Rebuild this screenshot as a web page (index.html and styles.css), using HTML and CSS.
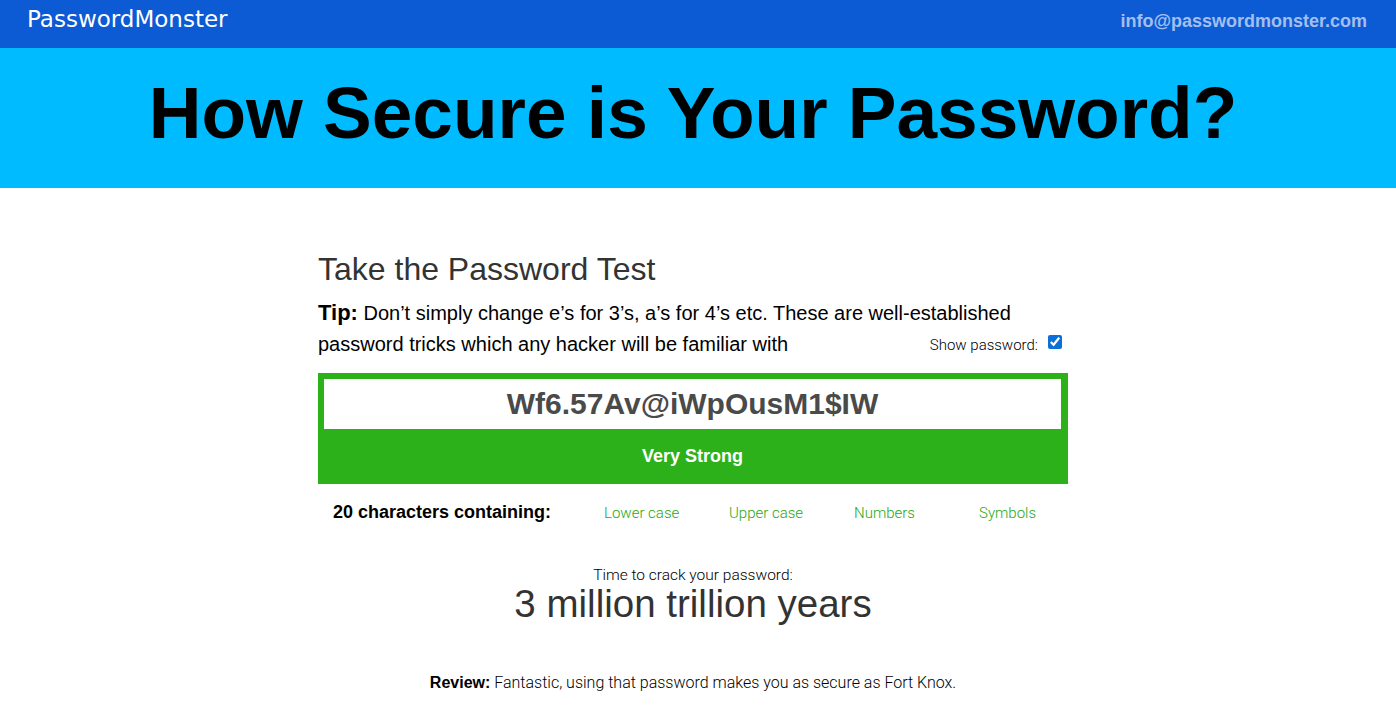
FILE: index.html
```html
<!DOCTYPE html>
<html lang="en">

<head>
  <meta charset="UTF-8">
  <meta name="viewport" content="width=device-width, initial-scale=1.0">
  <title>How Secure is Your Password? | PasswordMonster</title>
  <link rel="stylesheet" href="styles.css">
</head>

<body>
  <!-- Top bar -->
  <header class="pm-topbar">
    <a class="pm-logo" href="#">PasswordMonster</a>
    <a class="pm-email" href="#">info@passwordmonster.com</a>
  </header>

  <!-- Banner -->
  <div class="pm-banner">
    <h1 class="pm-banner-title">How Secure is Your Password?</h1>
  </div>

  <main class="pm-main">
    <div class="pm-tester">
      <h2 class="pm-heading">Take the Password Test</h2>

      <div class="pm-tip">
        <div class="pm-tip-line"><strong>Tip:</strong> Don’t simply change e’s for 3’s, a’s for 4’s etc. These are well-established</div>
        <div class="pm-tip-line pm-tip-last">
          <span>password tricks which any hacker will be familiar with</span>
          <label class="pm-show" for="pmShow">Show password: <input id="pmShow" type="checkbox" checked></label>
        </div>
      </div>

      <div class="pm-meter">
        <input class="pm-input" type="text" value="Wf6.57Av@iWpOusM1$IW" spellcheck="false">
        <div class="pm-strength">Very Strong</div>
      </div>

      <div class="pm-contains">
        <span class="pm-count">20 characters containing:</span>
        <span class="pm-type">Lower case</span>
        <span class="pm-type">Upper case</span>
        <span class="pm-type">Numbers</span>
        <span class="pm-type">Symbols</span>
      </div>

      <div class="pm-crack">
        <div class="pm-crack-label">Time to crack your password:</div>
        <div class="pm-crack-time">3 million trillion years</div>
      </div>

      <p class="pm-review"><strong>Review:</strong> Fantastic, using that password makes you as secure as Fort Knox.</p>
    </div>
  </main>
</body>

</html>
```

FILE: styles.css
```css
body {
  margin: 0;
  padding: 0;
  font-family: 'Liberation Sans', Arial, sans-serif;
  color: #000;
  background: #fff;
}

/* Topbar */
.pm-topbar {
  height: 48px;
  background-color: #0c5ad4;
  display: flex;
  align-items: center;
  justify-content: space-between;
  padding: 0 29px 0 27px;
}

.pm-logo {
  color: #fff;
  font-family: 'DejaVu Sans', sans-serif;
  font-size: 23px;
  text-decoration: none;
  margin-top: -10px;
}

.pm-email {
  color: #a3bfee;
  font-weight: 700;
  font-size: 18px;
  text-decoration: none;
  margin-top: -6px;
}

/* Banner */
.pm-banner {
  background-color: #00bbff;
  height: 140px;
  display: flex;
  align-items: center;
  justify-content: center;
  padding-right: 10px;
}

.pm-banner-title {
  margin: -11px 0 0;
  font-size: 73px;
  font-weight: 700;
  color: #000;
}

/* Main area */
.pm-main {
  padding: 63px 10px 0 0;
}

.pm-tester {
  width: 750px;
  margin: 0 auto;
}

.pm-heading {
  margin: 0;
  font-size: 32px;
  font-weight: 400;
  color: #333;
  line-height: 36px;
}

.pm-tip {
  margin-top: 10px;
  font-size: 20px;
  line-height: 31px;
}

.pm-tip strong {
  font-size: 22px;
}

.pm-tip-last {
  display: flex;
  justify-content: space-between;
  align-items: flex-end;
}

.pm-show {
  font-family: Roboto, sans-serif;
  font-weight: 300;
  font-size: 15px;
  line-height: 20px;
  display: flex;
  align-items: center;
  gap: 10px;
  margin: 0 6px 5px 0;
}

.pm-show input {
  width: 14px;
  height: 14px;
  margin: 0 0 6px 0;
  accent-color: #0b6fd8;
}

/* Meter */
.pm-meter {
  margin-top: 13px;
  background-color: #2db11a;
  padding: 6px 7px 0 6px;
  height: 105px;
}

.pm-input {
  display: block;
  width: 100%;
  height: 50px;
  box-sizing: border-box;
  border: none;
  outline: none;
  text-align: center;
  font-family: 'Liberation Sans', Arial, sans-serif;
  font-weight: 700;
  font-size: 30px;
  color: #4a4a4a;
  padding: 0;
}

.pm-strength {
  text-align: center;
  color: #fff;
  font-weight: 700;
  font-size: 18px;
  line-height: 55px;
}

/* Contains row */
.pm-contains {
  display: flex;
  align-items: center;
  margin-top: 18px;
  padding-left: 15px;
}

.pm-count {
  flex-shrink: 0;
  font-weight: 700;
  font-size: 18px;
  width: 271px;
}

.pm-type {
  flex-shrink: 0;
  font-family: Roboto, sans-serif;
  font-weight: 300;
  font-size: 15px;
  color: #26a814;
  width: 125px;
}

/* Crack time */
.pm-crack {
  text-align: center;
  margin-top: 43px;
}

.pm-crack-label {
  font-family: Roboto, sans-serif;
  font-weight: 300;
  font-size: 15.5px;
}

.pm-crack-time {
  font-size: 38.5px;
  color: #333;
  line-height: 40px;
}

.pm-review {
  text-align: center;
  margin: 49px 0 0;
  font-family: Roboto, sans-serif;
  font-weight: 300;
  font-size: 16px;
}

.pm-review strong {
  font-family: 'Liberation Sans', Arial, sans-serif;
  font-weight: 700;
}
```
